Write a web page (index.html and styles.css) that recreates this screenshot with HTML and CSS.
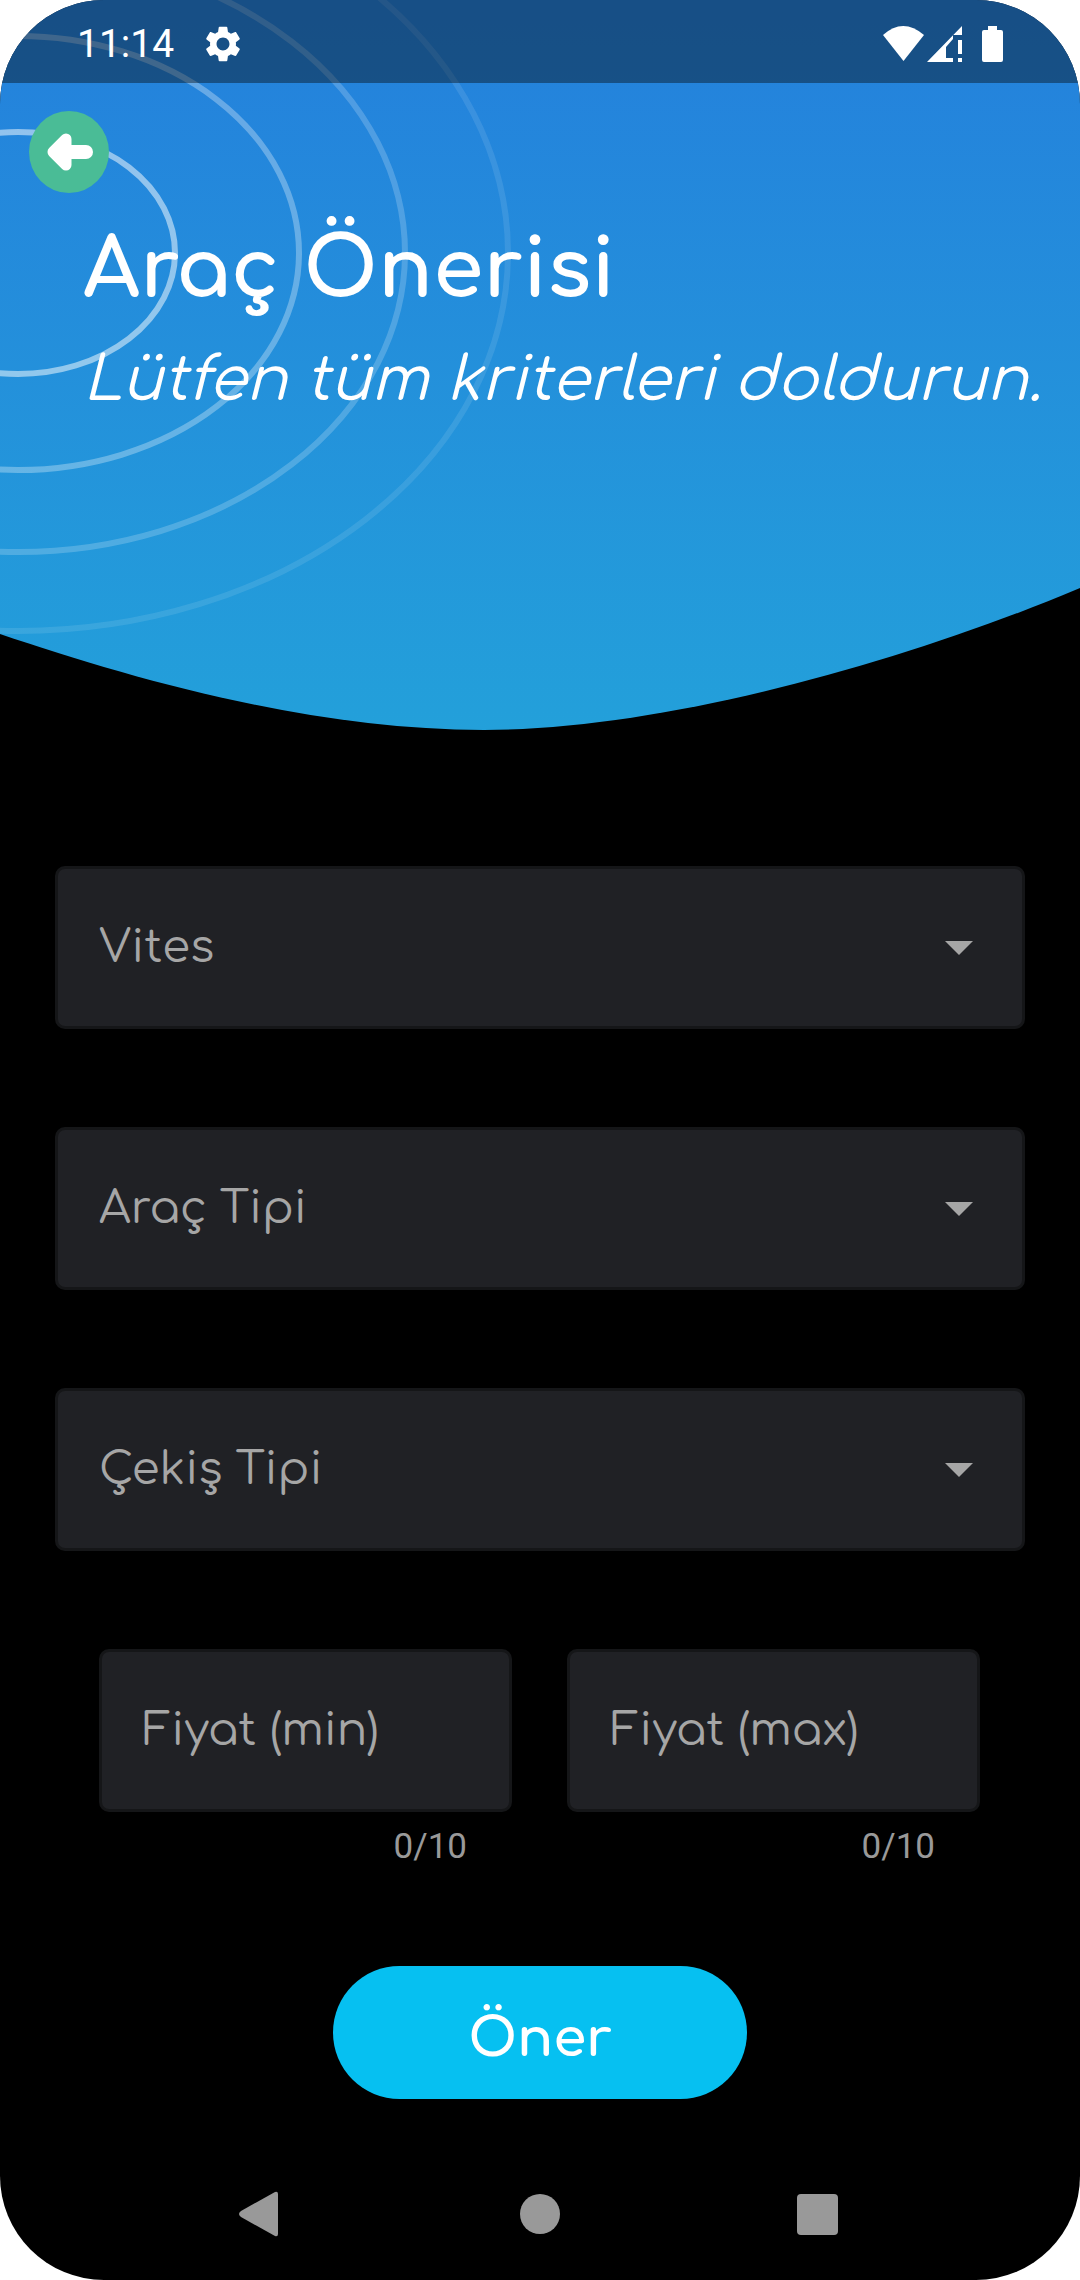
FILE: index.html
```html
<!DOCTYPE html>
<html lang="tr">
<head>
<meta charset="utf-8">
<meta name="viewport" content="width=device-width, initial-scale=1">
<title>Araç Önerisi</title>
<link rel="stylesheet" href="styles.css">
</head>
<body>
<div class="screen">
  <header class="hero">
    <svg class="hero-art" viewBox="0 0 1080 732" preserveAspectRatio="none" aria-hidden="true">
      <defs>
        <linearGradient id="sky" x1="0" y1="0" x2="0" y2="1">
          <stop offset="0" stop-color="#2480dc"/>
          <stop offset="1" stop-color="#23a0da"/>
        </linearGradient>
        <clipPath id="bowl"><path d="M0 0H1080V588C900 664 660 730 484 730C310 730 130 678 0 634Z"/></clipPath>
      </defs>
      <g clip-path="url(#bowl)">
        <rect width="1080" height="732" fill="url(#sky)"/>
        <g fill="none" stroke="#fff" stroke-width="6">
          <ellipse cx="18" cy="253" rx="157" ry="121" stroke-opacity=".5"/>
          <ellipse cx="18" cy="253" rx="281" ry="217" stroke-opacity=".3"/>
          <ellipse cx="18" cy="253" rx="387" ry="299" stroke-opacity=".2"/>
          <ellipse cx="18" cy="253" rx="490" ry="378" stroke-opacity=".1"/>
        </g>
      </g>
    </svg>
    <div class="status">
      <time class="clock">11:14</time>
      <svg class="gear" viewBox="2 2 20 20" aria-hidden="true"><path fill="#fff" d="M19.140 12.940c.04-.3.06-.61.06-.94 0-.32-.02-.64-.07-.94l2.030-1.580c.18-.14.23-.41.12-.61l-1.920-3.320c-.12-.22-.37-.29-.59-.22l-2.390.96c-.5-.38-1.030-.7-1.620-.94l-.36-2.540c-.04-.24-.24-.41-.48-.41h-3.840c-.24 0-.43.17-.47.41l-.36 2.540c-.59.24-1.130.57-1.620.94l-2.390-.96c-.22-.08-.47 0-.59.22L2.740 8.870c-.12.21-.08.47.12.61l2.030 1.580c-.05.3-.09.63-.09.94s.02.64.07.94l-2.030 1.580c-.18.14-.23.41-.12.61l1.920 3.320c.12.22.37.29.59.22l2.390-.96c.5.38 1.030.7 1.620.94l.36 2.540c.05.24.24.41.48.41h3.840c.24 0 .44-.17.47-.41l.36-2.540c.59-.24 1.130-.56 1.620-.94l2.390.96c.22.08.47 0 .59-.22l1.920-3.320c.12-.22.07-.47-.12-.61l-2.010-1.580zM12 15.600c-1.980 0-3.600-1.620-3.600-3.600s1.620-3.600 3.600-3.600 3.600 1.620 3.600 3.600-1.620 3.600-3.600 3.600z"/></svg>
      <span class="status-right">
        <svg class="wifi" viewBox="0 0 41 36" aria-hidden="true"><path fill="#fff" d="M0 9Q20-9 41 9L20.500 35z"/></svg>
        <svg class="signal" viewBox="0 0 35 36" aria-hidden="true"><path fill="#fff" d="M35 0V9H26V13L19 21V32H26V36H0zM31 14h4v14h-4zM31 32h4v4h-4z"/></svg>
        <svg class="battery" viewBox="0 0 21 36" aria-hidden="true"><path fill="#fff" d="M6 0h9v4h4q2 0 2 2v28q0 2-2 2H2q-2 0-2-2V6q0-2 2-2h4z"/></svg>
      </span>
    </div>
    <div class="hero-body">
      <button class="back" type="button" aria-label="Geri">
        <svg viewBox="0 0 80 82" aria-hidden="true"><ellipse cx="40" cy="41" rx="40" ry="41" fill="#4abc96"/><path d="M24 41L37 28V54Z" fill="#fff" stroke="#fff" stroke-width="11" stroke-linejoin="round"/><path d="M37 41H57" stroke="#fff" stroke-width="14" stroke-linecap="round"/></svg>
      </button>
      <h1 class="title">Araç Önerisi</h1>
      <p class="subtitle">Lütfen tüm kriterleri doldurun.</p>
    </div>
  </header>
  <form class="form">
    <select class="field" aria-label="Vites"><option>Vites</option></select>
    <select class="field" aria-label="Araç Tipi"><option>Araç Tipi</option></select>
    <select class="field" aria-label="Çekiş Tipi"><option>Çekiş Tipi</option></select>
    <div class="prices">
      <div class="price">
        <input class="field" type="text" inputmode="numeric" maxlength="10" placeholder="Fiyat (min)" aria-label="Fiyat (min)">
        <span class="counter">0/10</span>
      </div>
      <div class="price">
        <input class="field" type="text" inputmode="numeric" maxlength="10" placeholder="Fiyat (max)" aria-label="Fiyat (max)">
        <span class="counter">0/10</span>
      </div>
    </div>
    <button class="submit" type="button">Öner</button>
  </form>
  <nav class="nav">
    <button type="button" aria-label="Geri"><svg viewBox="0 0 48 48" aria-hidden="true"><path fill="#999" d="M41 4V44Q41 47 38 46L4 27Q0 24 4 21L38 2Q41 1 41 4Z"/></svg></button>
    <button type="button" aria-label="Ana ekran"><svg viewBox="0 0 48 48" aria-hidden="true"><circle cx="24" cy="24" r="20" fill="#999"/></svg></button>
    <button type="button" aria-label="Son uygulamalar"><svg viewBox="0 0 48 48" aria-hidden="true"><rect x="2" y="4" width="41" height="41" rx="4" fill="#999"/></svg></button>
  </nav>
</div>
</body>
</html>
```
FILE: styles.css
```css
* { box-sizing: border-box; }
body {
  margin: 0;
  background: #fff;
  font-family: Comfortaa, Quicksand, Lato, sans-serif;
}
button { border: 0; padding: 0; background: none; font: inherit; }
svg { display: block; }
.screen {
  min-height: 100vh;
  display: flex;
  flex-direction: column;
  background: #000;
  border-radius: 104px;
  overflow: hidden;
}
.hero {
  display: grid;
  grid-template-columns: minmax(0, 1fr);
  grid-template-rows: 83px 649px;
  color: #fff;
}
.hero-art { grid-area: 1 / 1 / 3 / 2; width: 100%; height: 100%; }
.status {
  grid-area: 1 / 1;
  z-index: 1;
  display: flex;
  align-items: center;
  padding: 4px 77px 0;
  background: rgba(4, 6, 4, .4);
  font-family: Roboto, sans-serif;
}
.clock { font-size: 39px; }
.gear { width: 36px; height: 36px; margin-left: 31px; }
.status-right { display: flex; align-items: center; margin-left: auto; }
.wifi { width: 41px; height: 36px; }
.signal { width: 35px; height: 36px; margin: 0 20px 0 3px; }
.battery { width: 21px; height: 36px; }
.hero-body { grid-area: 2 / 1; z-index: 1; padding: 28px 0 0 29px; }
.back { display: block; width: 80px; height: 82px; }
.back svg { width: 100%; height: 100%; }
.title { margin: 26px 0 0 54px; font-size: 81px; line-height: 104px; font-weight: 700; }
.subtitle { margin: 19px 0 0 54px; font-size: 61px; line-height: 76px; font-style: italic; white-space: nowrap; }
.form { display: flex; flex-direction: column; padding: 134px 55px 0; gap: 98px; }
.field {
  width: 100%;
  height: 163px;
  padding: 0 41px;
  border: 3px solid #151618;
  border-radius: 10px;
  background: #202125;
  color: #a6a6a6;
  font: 45px Comfortaa, Quicksand, Lato, sans-serif;
  appearance: none;
}
select.field {
  background: #202125 url("data:image/svg+xml,%3Csvg xmlns='http://www.w3.org/2000/svg' width='28' height='14'%3E%3Cpath d='M0 0H28L14 14Z' fill='%23a6a6a6'/%3E%3C/svg%3E") no-repeat right 49px center;
}
.field::placeholder { color: #a6a6a6; opacity: 1; }
.prices { display: grid; grid-template-columns: 1fr 1fr; gap: 55px; padding: 0 45px 0 44px; }
.price { display: flex; flex-direction: column; }
.counter {
  align-self: flex-end;
  margin: 16px 45px 2px 0;
  color: #999;
  font: 35px/38px Roboto, sans-serif;
}
.submit {
  align-self: center;
  width: 414px;
  height: 133px;
  padding-top: 12px;
  border-radius: 67px;
  background: #06c0f1;
  color: #fff;
  font-size: 53px;
  font-weight: 700;
}
.nav { display: flex; justify-content: space-around; margin: auto 121px 0; padding-bottom: 42px; }
.nav svg { width: 48px; height: 48px; }
```
